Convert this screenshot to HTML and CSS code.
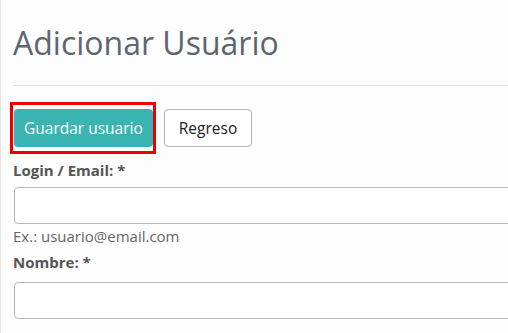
FILE: index.html
```html
<!DOCTYPE html>
<html lang="pt">
<head>
    <meta charset="UTF-8">
    <meta name="viewport" content="width=device-width, initial-scale=1.0">
    <title>Adicionar Usuário</title>
    <link rel="stylesheet" href="styles.css">
</head>
<body>
    <div class="page">
        <h1 class="page-title">Adicionar Usuário</h1>
        <form class="user-form">
            <div class="actions">
                <div class="highlight">
                    <button type="submit" class="btn btn-save">Guardar usuario</button>
                </div>
                <button type="button" class="btn btn-back">Regreso</button>
            </div>
            <div class="field">
                <label for="login">Login / Email: *</label>
                <input type="text" id="login">
                <span class="help">Ex.: usuario@email.com</span>
            </div>
            <div class="field field-name">
                <label for="nombre">Nombre: *</label>
                <input type="text" id="nombre">
            </div>
        </form>
    </div>
</body>
</html>
```
FILE: styles.css
```css
* {
    margin: 0;
    padding: 0;
    box-sizing: border-box;
}

body {
    font-family: 'Open Sans', 'Noto Sans', sans-serif;
    background-color: #fdfdfd;
    overflow: hidden;
}

.page {
    width: 620px;
    height: 333px;
    border-left: 1px solid #e6e6e6;
    padding: 23px 0 0 12px;
}

.page-title {
    font-size: 32px;
    font-weight: 400;
    color: #5c6670;
    line-height: 40px;
    padding-bottom: 22px;
    border-bottom: 1px solid #e4e4e4;
}

.actions {
    display: flex;
    align-items: center;
    gap: 8px;
    margin-top: 16px;
}

.highlight {
    border: 3px solid #ee0000;
    padding: 4px 0 4px 1px;
    margin-left: -3px;
}

.btn {
    font-family: inherit;
    font-size: 15.5px;
    height: 38px;
    border-radius: 4px;
    cursor: pointer;
}

.btn-save {
    background-color: #3ab4b3;
    color: #fff;
    border: none;
    padding: 0 10px;
}

.btn-back {
    background-color: #fff;
    color: #222;
    border: 1px solid #b5b5b5;
    padding: 0 14px;
}

.field {
    display: flex;
    flex-direction: column;
    margin-top: 6px;
}

.field label {
    font-size: 15px;
    font-weight: 700;
    color: #555;
    line-height: 20px;
    margin-bottom: 7px;
}

.field-name label {
    margin-bottom: 10px;
}

.field input {
    height: 37px;
    border: 1px solid #b8b8b8;
    border-radius: 4px;
    background: #fff;
    margin-left: 1px;
}

.help {
    font-size: 15px;
    color: #666;
    line-height: 20px;
    margin-top: 2px;
}
```
